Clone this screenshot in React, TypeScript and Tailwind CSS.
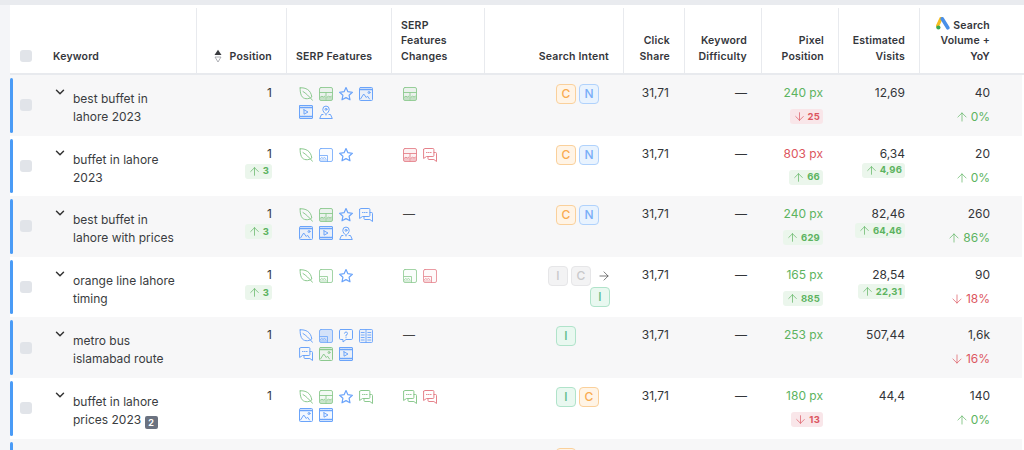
import { ArrowDown, ArrowRight, ArrowUp, ChevronDown } from "lucide-react";
import type { ReactNode } from "react";

const cols = "grid grid-cols-[187px_90px_105px_93px_139px_61px_77px_77px_81px_1fr]";

const green = "text-[#8cc98f]";
const blue = "text-[#6ba4fa]";
const red = "text-[#e5828b]";

type IconName = "leaf" | "panels" | "star" | "image" | "video" | "pin" | "thumb" | "thumbOn" | "chat" | "question" | "book";
type Feature = [IconName, string];

function FeatureIcon({ name, color }: { name: IconName; color: string }) {
  const common = {
    viewBox: "0 0 14 14",
    fill: "none",
    stroke: "currentColor",
    strokeWidth: 1,
    strokeLinecap: "round" as const,
    strokeLinejoin: "round" as const,
    className: `w-[14px] h-[14px] ${color}`,
  };
  if (name === "leaf")
    return (
      <svg {...common}>
        <path d="M1.2.8c5.500-.3 10.600 1.900 11.600 9.200-3.400 2.600-8.600 2.400-10.400-1.400C1.500 6.500.9 3.500 1.200.8Z" />
        <path d="M4 4.500c3 1.800 6 4.700 9.500 8.800" />
      </svg>
    );
  if (name === "panels")
    return (
      <svg {...common} strokeWidth={0.900}>
        <rect x="0.500" y="0.500" width="13" height="13" rx="1.500" fill="currentColor" fillOpacity="0.1" />
        <path d="M.5 5.500h13M7 5.500v8" />
        <path d="M1.500 10l1.500-.8 1.300.8 1.500-.8M8.200 10l1.500-.8 1.300.8 1.500-.8" />
        <rect x="1" y="10" width="5.500" height="3" fill="currentColor" fillOpacity="0.4" stroke="none" />
        <rect x="7.500" y="10" width="5.500" height="3" fill="currentColor" fillOpacity="0.4" stroke="none" />
      </svg>
    );
  if (name === "star")
    return (
      <svg {...common} strokeWidth={1.200}>
        <path d="M7 .6l1.900 4.100 4.500.6-3.300 3 .9 4.500L7 10.600l-4 2.200.9-4.500-3.300-3 4.500-.6L7 .6Z" />
      </svg>
    );
  if (name === "image")
    return (
      <svg {...common}>
        <rect x="0.500" y="0.500" width="13" height="13" rx="1" fill="currentColor" fillOpacity="0.08" />
        <path d="M.5 2.500h13" strokeWidth={1.500} />
        <path d="M1.500 12l3.200-5 2.600 3.500 1.200-1.300 2 2.800" />
        <circle cx="10" cy="5.500" r="1" />
      </svg>
    );
  if (name === "video")
    return (
      <svg {...common}>
        <rect x="0.500" y="0.500" width="13" height="13" rx="0.500" fill="currentColor" fillOpacity="0.08" />
        <path d="M.5 2.500h13M.5 11.500h13" strokeWidth={1.500} strokeDasharray="1.500 0.800" />
        <path d="M5 4.800v4.400L9 7 5 4.800Z" />
      </svg>
    );
  if (name === "pin")
    return (
      <svg {...common}>
        <path d="M7 9.500C5.200 7.800 3.800 6.300 3.800 4.300a3.200 3.200 0 0 1 6.400 0c0 2-1.400 3.500-3.200 5.200Z" />
        <circle cx="7" cy="4.300" r="1" />
        <path d="M4 9.500H2.500L.7 13.500h12.600L11.500 9.500H10" />
      </svg>
    );
  if (name === "thumb" || name === "thumbOn")
    return (
      <svg {...common} strokeWidth={0.800}>
        <rect x="0.500" y="0.500" width="13" height="13" rx="1.500" fill="currentColor" fillOpacity={name === "thumbOn" ? 0.25 : 0.04} />
        <path d="M1 7.500h7.500v6" />
        <path d="M1.500 10.500l1.300-1 1.200 1 1.300-1 1.500 1" />
        <rect x="1" y="11" width="7" height="2" fill="currentColor" fillOpacity="0.3" stroke="none" />
      </svg>
    );
  if (name === "chat")
    return (
      <svg {...common}>
        <path d="M.6 1.500a1 1 0 0 1 1-1h8.300a1 1 0 0 1 1 1v6a1 1 0 0 1-1 1H3.500l-2.900 2V1.500Z" />
        <path d="M11 4.500h1.500a1 1 0 0 1 1 1v8l-2.600-2H6a1 1 0 0 1-1-1V8.500" />
        <path d="M3.500 4.500h.6M5.500 4.500h.6M7.500 4.500h.6" />
      </svg>
    );
  if (name === "question")
    return (
      <svg {...common}>
        <path d="M1.700.5h10.600a1.200 1.200 0 0 1 1.200 1.200v7.600a1.200 1.200 0 0 1-1.200 1.200H7l-3 2.500v-2.500H1.700A1.200 1.200 0 0 1 .5 9.300V1.700A1.200 1.200 0 0 1 1.700.5Z" />
        <path d="M5.500 4.200A1.500 1.500 0 1 1 7 6v1M7 8.600v.2" />
      </svg>
    );
  return (
    <svg {...common} strokeWidth={0.900}>
      <rect x="0.500" y="0.500" width="13" height="13" rx="1" fill="currentColor" fillOpacity="0.08" />
      <path d="M7 .5v13M2.200 3.500h3M2.200 6h3M2.200 8.500h3M2.200 11h3M8.800 3.500h3M8.800 6h3M8.800 8.500h3M8.800 11h3" />
    </svg>
  );
}

function Delta({ up, children }: { up: boolean; children: ReactNode }) {
  return (
    <span
      className={`inline-flex items-center gap-[2px] h-[15px] px-[3px] rounded-[3px] text-[9.500px] tracking-[0.200px] font-bold leading-none ${
        up ? "bg-[#ebf6ec] text-[#5cb360]" : "bg-[#f9e6e9] text-[#dc5660]"
      }`}
    >
      {up ? <ArrowUp className="w-[13px] h-[13px]" strokeWidth={1.300} /> : <ArrowDown className="w-[13px] h-[13px]" strokeWidth={1.300} />}
      {children}
    </span>
  );
}

const badgeStyle: Record<string, string> = {
  C: "border-[#fad09b] bg-[#fff4e6] text-[#f9ab50]",
  N: "border-[#b0d2fc] bg-[#e9f3fe] text-[#78aef8]",
  I: "border-[#b0e3ca] bg-[#e9f8f0] text-[#5fbb8d]",
  x: "border-[#e6e6e8] bg-[#f3f3f4] text-[#c9c9cb]",
};

function Badge({ label, old }: { label: string; old?: boolean }) {
  return (
    <span
      className={`flex items-center justify-center w-[20px] h-[20px] rounded-[4px] border text-[12px] font-medium ${
        old ? badgeStyle.x : badgeStyle[label]
      }`}
    >
      {label}
    </span>
  );
}

function Icons({ items }: { items: Feature[] }) {
  return (
    <div className="grid grid-cols-[repeat(4,20px)] gap-y-[4px]">
      {items.map(([name, color], i) => (
        <FeatureIcon key={i} name={name} color={color} />
      ))}
    </div>
  );
}

function GoogleAds() {
  return (
    <svg viewBox="0 0 14 13" className="inline-block w-[14px] h-[13px] mr-[3px] align-[-1px]">
      <path d="M5 1.500 1.500 9" stroke="#f7bd1f" strokeWidth="3.200" strokeLinecap="round" />
      <path d="M6.200 1.800 11.800 10.800" stroke="#4a90e8" strokeWidth="3.600" strokeLinecap="round" />
      <circle cx="2.400" cy="10.500" r="2.100" fill="#39a853" />
    </svg>
  );
}

type Row = {
  keyword: ReactNode;
  pos?: string;
  posDelta?: string;
  features: Feature[];
  changes: Feature[] | null;
  intent: ReactNode;
  px?: string;
  pxRed?: boolean;
  pxDelta?: [boolean, string];
  visits?: string;
  visitsDelta?: string;
  volume?: string;
  yoy?: [boolean, string];
};

const cn = (
  <div className="ml-auto mr-[11px] w-[43px] flex gap-[3px] mt-[-1px]">
    <Badge label="C" />
    <Badge label="N" />
  </div>
);

const rows: Row[] = [
  {
    keyword: "best buffet in lahore 2023",
    pos: "1",
    features: [["leaf", green], ["panels", green], ["star", blue], ["image", blue], ["video", blue], ["pin", blue]],
    changes: [["panels", green]],
    intent: cn,
    px: "240 px",
    pxDelta: [false, "25"],
    visits: "12,69",
    volume: "40",
    yoy: [true, "0%"],
  },
  {
    keyword: "buffet in lahore 2023",
    pos: "1",
    posDelta: "3",
    features: [["leaf", green], ["thumb", blue], ["star", blue]],
    changes: [["panels", red], ["chat", red]],
    intent: cn,
    px: "803 px",
    pxRed: true,
    pxDelta: [true, "66"],
    visits: "6,34",
    visitsDelta: "4,96",
    volume: "20",
    yoy: [true, "0%"],
  },
  {
    keyword: "best buffet in lahore with prices",
    pos: "1",
    posDelta: "3",
    features: [["leaf", green], ["panels", green], ["star", blue], ["chat", blue], ["image", blue], ["video", blue], ["pin", blue]],
    changes: null,
    intent: cn,
    px: "240 px",
    pxDelta: [true, "629"],
    visits: "82,46",
    visitsDelta: "64,46",
    volume: "260",
    yoy: [true, "86%"],
  },
  {
    keyword: "orange line lahore timing",
    pos: "1",
    posDelta: "3",
    features: [["leaf", green], ["thumb", green], ["star", blue]],
    changes: [["thumb", green], ["thumb", red]],
    intent: (
      <div className="flex flex-wrap justify-end gap-y-[1px] mt-[-1px]">
        <div className="flex gap-[3px] items-center">
          <Badge label="I" old />
          <Badge label="C" old />
          <ArrowRight className="w-[14px] h-[14px] ml-[3px] mr-[-1px] text-[#444]" strokeWidth={1.200} />
        </div>
        <div className="w-full flex justify-end">
          <Badge label="I" />
        </div>
      </div>
    ),
    px: "165 px",
    pxDelta: [true, "885"],
    visits: "28,54",
    visitsDelta: "22,31",
    volume: "90",
    yoy: [false, "18%"],
  },
  {
    keyword: "metro bus islamabad route",
    pos: "1",
    features: [["leaf", blue], ["thumbOn", blue], ["question", blue], ["book", blue], ["chat", blue], ["image", green], ["video", blue]],
    changes: null,
    intent: (
      <div className="ml-auto mr-[11px] w-[43px] mt-[-1px]">
        <Badge label="I" />
      </div>
    ),
    px: "253 px",
    visits: "507,44",
    volume: "1,6k",
    yoy: [false, "16%"],
  },
  {
    keyword: (
      <>
        buffet in lahore prices 2023{" "}
        <span className="inline-flex items-center justify-center w-[13px] h-[13px] rounded-[2px] bg-[#6b7280] text-white text-[9px] leading-none font-bold align-[-2px]">
          2
        </span>
      </>
    ),
    pos: "1",
    features: [["leaf", green], ["panels", green], ["star", blue], ["chat", green], ["image", blue], ["video", blue]],
    changes: [["chat", green], ["chat", red]],
    intent: (
      <div className="ml-auto mr-[11px] w-[43px] flex gap-[3px] mt-[-1px]">
        <Badge label="I" />
        <Badge label="C" />
      </div>
    ),
    px: "180 px",
    pxDelta: [false, "13"],
    visits: "44,4",
    volume: "140",
    yoy: [true, "0%"],
  },
  {
    keyword: "",
    features: [],
    changes: [],
    intent: (
      <div className="ml-auto mr-[11px] w-[43px] flex gap-[3px] mt-[-1px]">
        <Badge label="C" />
      </div>
    ),
  },
];

const headCell = "border-r border-[#e8eaee] flex items-end pb-[9px] pr-[14px] justify-end text-right";

export default function App() {
  return (
    <div
      className="h-[450px] overflow-hidden bg-white text-[#333539] text-[12px] leading-[18px]"
      style={{ fontFamily: "Inter, 'Liberation Sans', sans-serif" }}
    >
      <div className="h-[5px] bg-[#e9ebef]" />
      <div className="flex h-[445px]">
        <div className="w-[10px] bg-[#f4f5f8] shrink-0" />
        <div className="flex-1 min-w-0 pt-[3px]">
          <div className={`${cols} h-[67px] border-b-2 border-[#e8eaee] text-[10.500px] font-semibold leading-[15.500px] tracking-[0.200px] text-[#34363b]`}>
            <div className="border-r border-[#e8eaee] flex items-end pb-[9px] pl-[10px]">
              <span className="w-[12px] h-[12px] rounded-[3px] bg-[#e1e4e9] mb-[2px]" />
              <span className="ml-[21px]">Keyword</span>
            </div>
            <div className={headCell}>
              <svg viewBox="0 0 8 14" className="w-[8px] h-[14px] mr-[8px] mb-px">
                <path d="M4 .8 7.500 6H.5L4 .8Z" fill="#3a3c40" />
                <path d="M1 8h6L4 13 1 8Z" fill="none" stroke="#9a9da3" strokeWidth="0.800" />
              </svg>
              Position
            </div>
            <div className="border-r border-[#e8eaee] flex items-end pb-[9px] pl-[9px]">SERP Features</div>
            <div className="border-r border-[#e8eaee] flex items-end pb-[9px] pl-[9px]">
              <span>SERP<br />Features<br />Changes</span>
            </div>
            <div className={headCell}>Search Intent</div>
            <div className={headCell}>
              <span>Click<br />Share</span>
            </div>
            <div className={headCell}>
              <span>Keyword<br />Difficulty</span>
            </div>
            <div className={headCell}>
              <span>Pixel<br />Position</span>
            </div>
            <div className={headCell}>
              <span>Estimated<br />Visits</span>
            </div>
            <div className="flex items-end justify-end text-right pb-[9px] pr-[34px]">
              <span>
                <GoogleAds />
                Search<br />Volume +<br />YoY
              </span>
            </div>
          </div>

          <div>
            {rows.map((r, i) => (
              <div key={i} className={`${cols} mr-[2px] h-[60.600px] ${i % 2 === 0 ? "bg-[#f7f7f8]" : "bg-white"}`}>
                <div className="flex items-stretch">
                  <span className="w-[3px] my-[3px] rounded-[2px] bg-[#4a9bf6]" />
                  <div className="flex items-center pl-[7px]">
                    <span className="w-[12px] h-[12px] rounded-[3px] bg-[#e1e4e9]" />
                  </div>
                  <ChevronDown className="w-[14px] h-[14px] ml-[21px] mt-[10px] shrink-0 text-[#333]" strokeWidth={2.500} />
                  <div className="w-[105px] ml-[6px] mt-[15px] leading-[18px] text-[#3a3c40]">{r.keyword}</div>
                </div>
                <div className="pt-[9px] pr-[15px] flex flex-col items-end gap-[1px]">
                  <span>{r.pos}</span>
                  {r.posDelta && <Delta up>{r.posDelta}</Delta>}
                </div>
                <div className="pt-[12px] pl-[12px]">
                  <Icons items={r.features} />
                </div>
                <div className="pt-[12px] pl-[11px]">
                  {r.changes ? <Icons items={r.changes} /> : <span className="block mt-[-3px] text-[#444]">—</span>}
                </div>
                <div className="pt-[10px] pr-[14px]">{r.intent}</div>
                <div className="pt-[9px] pr-[16px] text-right">{i < 6 && "31,71"}</div>
                <div className="pt-[9px] pr-[15px] text-right">{i < 6 && "—"}</div>
                <div className="pt-[9px] pr-[16px] flex flex-col items-end gap-[7px]">
                  <span className={r.pxRed ? "text-[#dc5660]" : "text-[#5cb360]"}>{r.px}</span>
                  {r.pxDelta && <Delta up={r.pxDelta[0]}>{r.pxDelta[1]}</Delta>}
                </div>
                <div className="pt-[9px] pr-[15px] flex flex-col items-end">
                  <span>{r.visits}</span>
                  {r.visitsDelta && <Delta up>{r.visitsDelta}</Delta>}
                </div>
                <div className="pt-[9px] pr-[32px] flex flex-col items-end gap-[6px]">
                  <span>{r.volume}</span>
                  {r.yoy && (
                    <span className={`flex items-center gap-[2px] ${r.yoy[0] ? "text-[#5cb360]" : "text-[#dc5660]"}`}>
                      {r.yoy[0] ? <ArrowUp className="w-[14px] h-[14px]" strokeWidth={1.200} /> : <ArrowDown className="w-[14px] h-[14px]" strokeWidth={1.200} />}
                      {r.yoy[1]}
                    </span>
                  )}
                </div>
              </div>
            ))}
          </div>
        </div>
      </div>
    </div>
  );
}
